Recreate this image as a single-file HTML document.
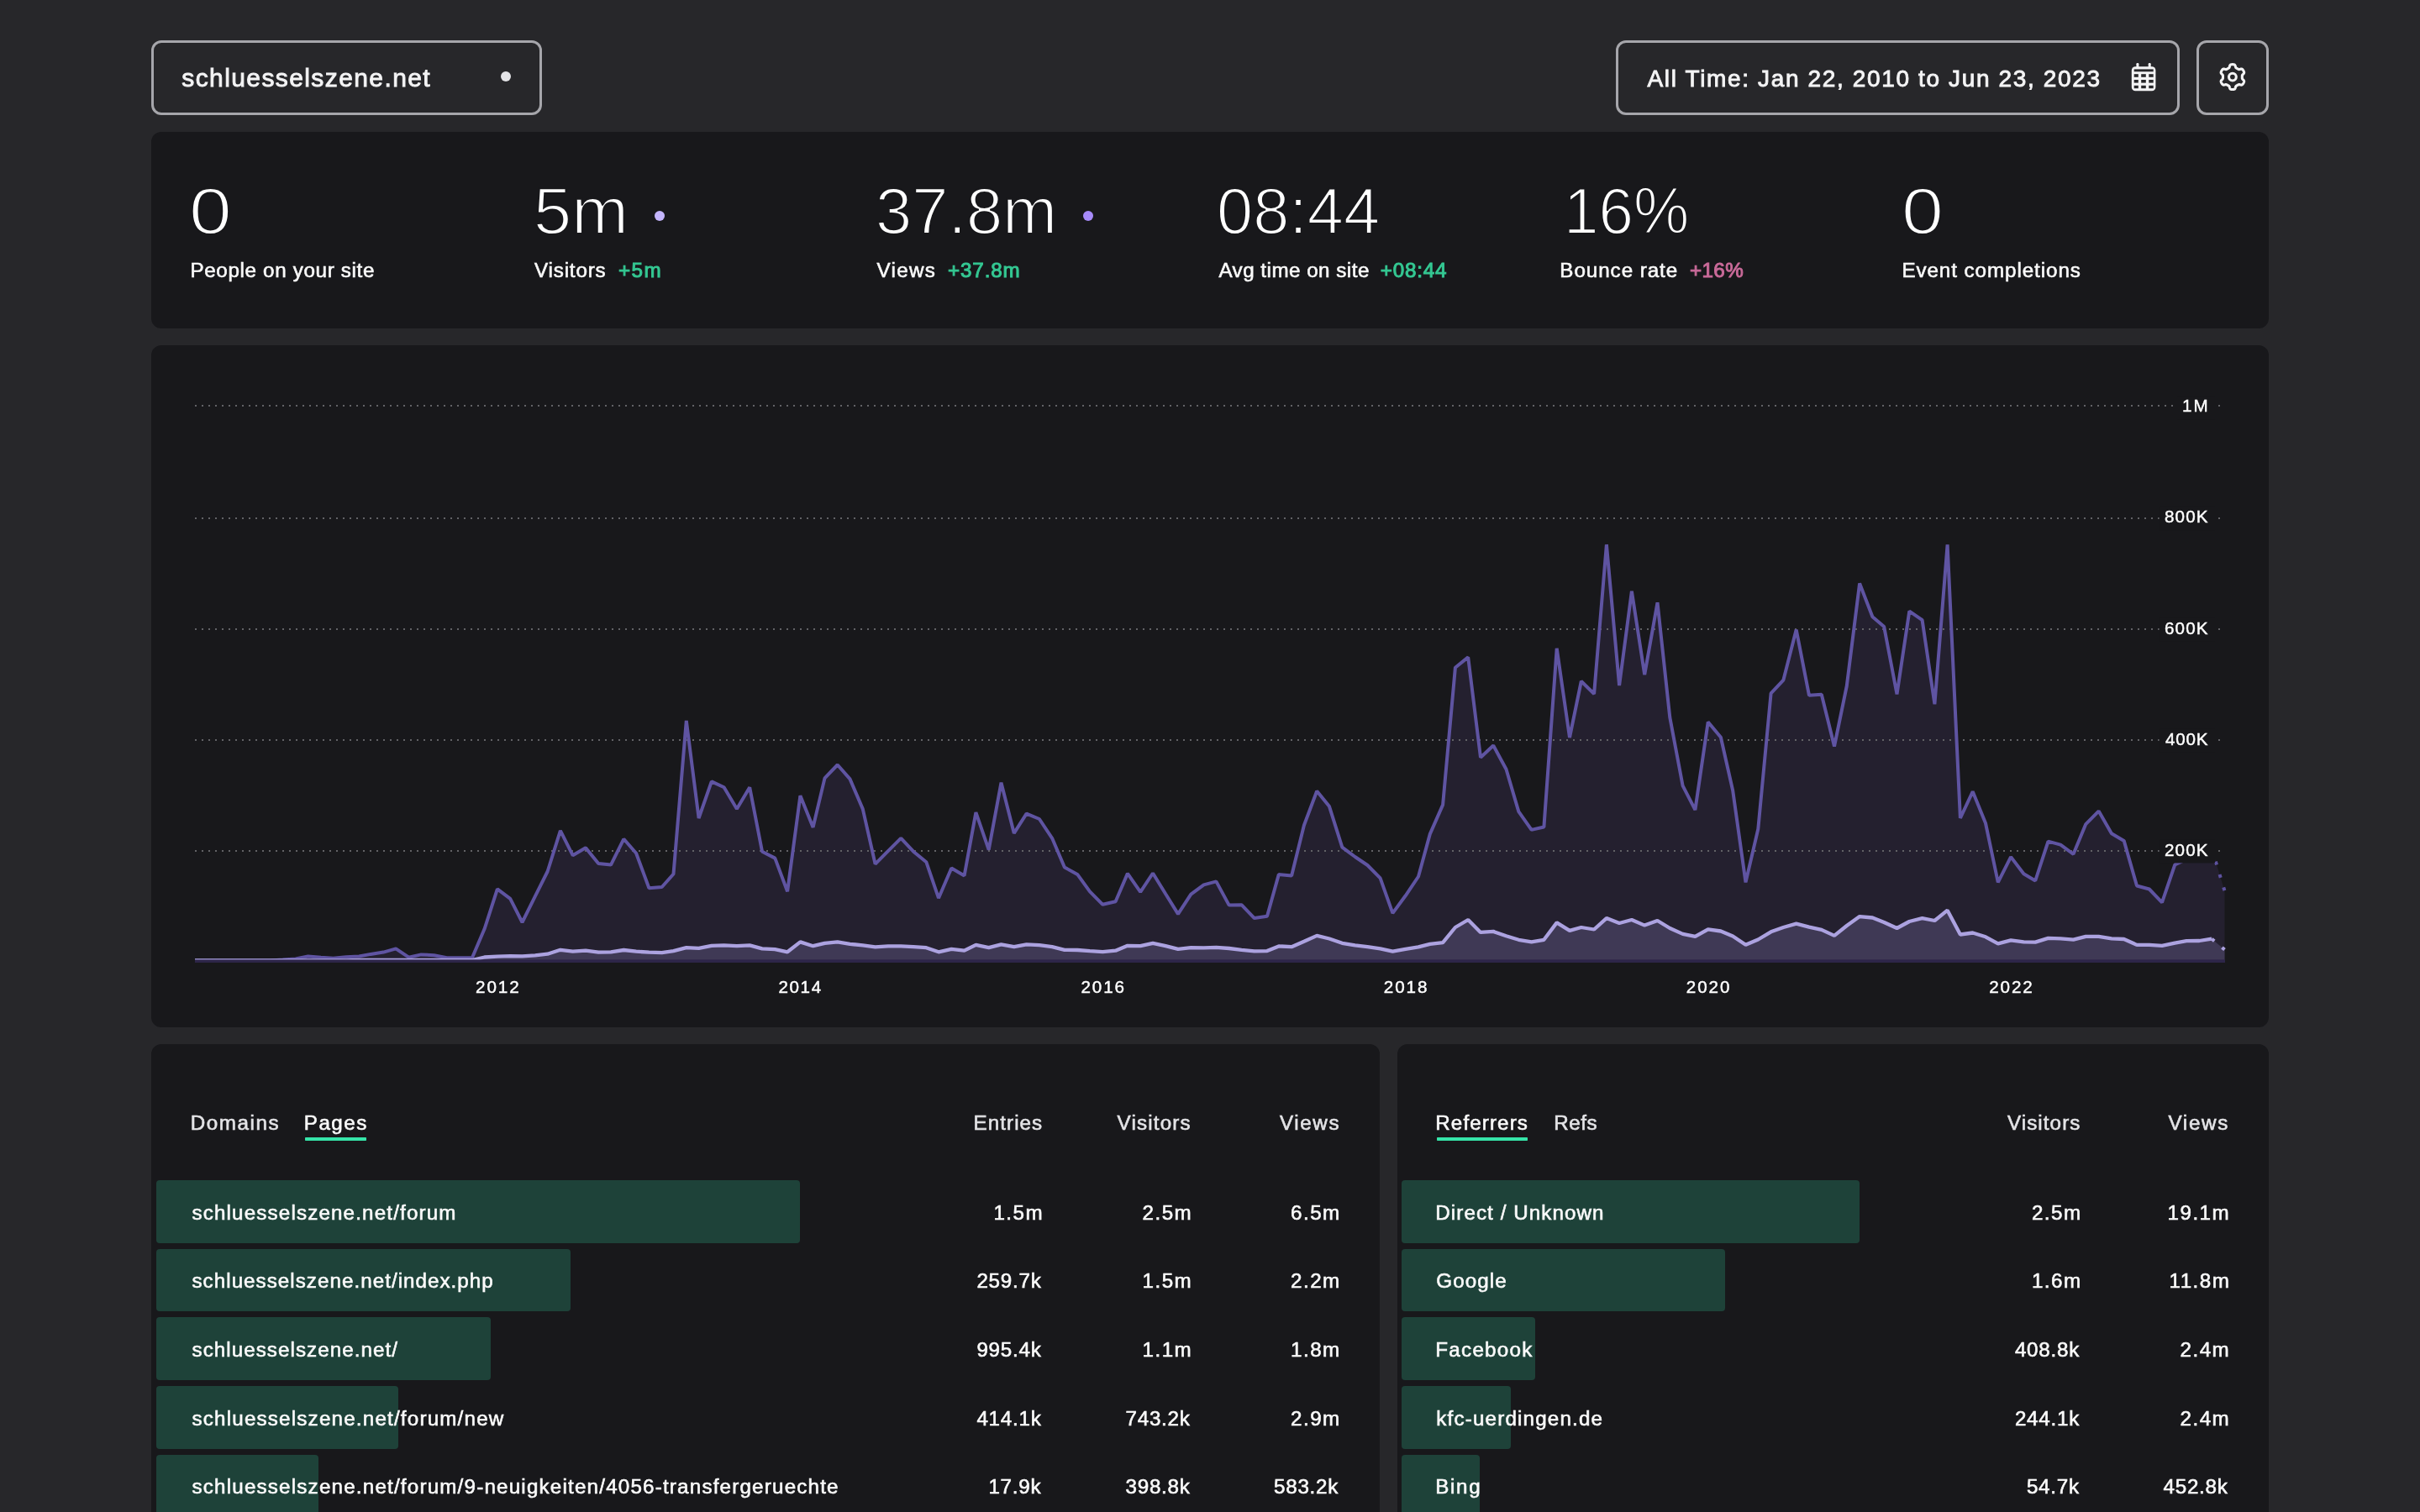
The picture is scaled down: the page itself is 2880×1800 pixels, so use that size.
<!DOCTYPE html>
<html lang="en"><head><meta charset="utf-8"><title>schluesselszene.net – Analytics</title>
<style>
html,body{margin:0;padding:0;background:#27272a;}
body{width:2880px;height:1800px;position:relative;overflow:hidden;font-family:"Liberation Sans",sans-serif;}
.t{position:absolute;white-space:pre;line-height:1;font-family:"Liberation Sans",sans-serif;}
.card{position:absolute;background:#18181b;border-radius:12px;}
.box{position:absolute;box-sizing:border-box;border:3px solid #a6a6ab;border-radius:12px;}
.bar{position:absolute;height:74.5px;background:#1e4239;border-radius:4px;}
.dot{position:absolute;border-radius:50%;}
.ul{position:absolute;height:4.4px;background:#36e5a9;border-radius:0.8px;}
.chart{position:absolute;left:0;top:0;}
.layer{position:absolute;left:0;top:0;width:2880px;height:1800px;will-change:transform;}
@media (max-width:1600px){html{zoom:0.5;}}
</style></head><body>
<div class="box" style="left:180px;top:48px;width:465px;height:89px"></div>
<div class="box" style="left:1923px;top:48px;width:671px;height:89px"></div>
<div class="box" style="left:2614px;top:48px;width:86px;height:89px"></div>
<div class="dot" style="left:595.8px;top:85.3px;width:12px;height:12px;background:#e4e4e7"></div>
<div class="card" style="left:180px;top:157px;width:2520px;height:233.5px"></div>
<div class="card" style="left:180px;top:411px;width:2520px;height:812px"></div>
<div class="card" style="left:180px;top:1242.6px;width:1461.8px;height:600px"></div>
<div class="card" style="left:1662.6px;top:1242.6px;width:1037.4px;height:600px"></div>
<div class="dot" style="left:778.5px;top:250.7px;width:12.6px;height:12.6px;background:#c4b5fd"></div>
<div class="dot" style="left:1288.7px;top:250.7px;width:12.6px;height:12.6px;background:#a78bfa"></div>
<div class="bar" style="left:186px;top:1405.0px;width:766.2px"></div><div class="bar" style="left:186px;top:1486.7px;width:493.0px"></div><div class="bar" style="left:186px;top:1568.3px;width:397.9px"></div><div class="bar" style="left:186px;top:1650.0px;width:288.2px"></div><div class="bar" style="left:186px;top:1731.6px;width:193.1px"></div><div class="bar" style="left:1668px;top:1405.0px;width:545.0px"></div><div class="bar" style="left:1668px;top:1486.7px;width:385.0px"></div><div class="bar" style="left:1668px;top:1568.3px;width:159.0px"></div><div class="bar" style="left:1668px;top:1650.0px;width:129.9px"></div><div class="bar" style="left:1668px;top:1731.6px;width:92.9px"></div>
<div class="ul" style="left:362.8px;top:1353.8px;width:73.2px"></div>
<div class="ul" style="left:1710.3px;top:1353.8px;width:107.8px"></div>
<svg class="chart" width="2880" height="1800" viewBox="0 0 2880 1800"><polygon points="232.0,1143.4 247.3,1143.4 261.1,1143.4 276.4,1143.4 291.2,1143.4 306.5,1143.4 321.2,1143.4 336.5,1142.5 351.8,1141.5 366.6,1138.5 381.9,1139.8 396.7,1140.8 412.0,1139.3 427.3,1138.5 441.1,1135.9 456.3,1133.6 471.1,1129.3 486.4,1139.7 501.2,1136.4 516.5,1137.2 531.8,1140.2 546.6,1140.2 561.9,1140.2 576.6,1105.8 591.9,1058.3 607.2,1069.8 621.5,1098.0 636.8,1067.1 651.6,1037.5 666.9,988.9 681.7,1018.3 697.0,1009.3 712.2,1028.0 727.0,1029.6 742.3,998.8 757.1,1015.7 772.4,1057.3 787.7,1056.0 801.5,1040.5 816.8,857.9 831.6,974.0 846.8,930.4 861.6,937.3 876.9,963.1 892.2,937.3 907.0,1013.7 922.3,1021.6 937.1,1061.3 952.4,947.2 967.6,984.9 981.5,926.4 996.7,910.5 1011.5,927.4 1026.8,963.1 1041.6,1028.6 1056.9,1013.1 1072.2,997.8 1087.0,1013.7 1102.3,1026.2 1117.0,1069.2 1132.3,1033.5 1147.6,1042.5 1161.4,967.1 1176.7,1011.7 1191.5,931.7 1206.8,991.9 1221.6,968.7 1236.9,975.0 1252.1,997.8 1266.9,1032.5 1282.2,1040.9 1297.0,1061.3 1312.3,1076.8 1327.6,1073.2 1341.9,1039.9 1357.2,1061.9 1372.0,1039.5 1387.2,1064.3 1402.0,1088.1 1417.3,1064.7 1432.6,1053.4 1447.4,1049.4 1462.7,1077.6 1477.5,1077.2 1492.8,1093.1 1508.0,1090.7 1521.8,1041.1 1537.1,1042.5 1551.9,982.5 1567.2,941.7 1582.0,960.1 1597.3,1008.7 1612.6,1020.0 1627.4,1030.0 1642.6,1045.4 1657.4,1087.1 1672.7,1066.3 1688.0,1043.5 1701.8,992.9 1717.1,958.1 1731.9,794.7 1747.2,782.4 1762.0,901.8 1777.2,887.5 1792.5,915.7 1807.3,966.1 1822.6,987.9 1837.4,984.5 1852.7,771.9 1868.0,878.0 1881.8,811.0 1897.1,826.0 1911.9,648.3 1927.1,816.1 1941.9,703.8 1957.2,803.2 1972.5,717.3 1987.3,854.2 2002.6,935.3 2017.4,964.1 2032.7,859.5 2047.9,877.8 2062.2,941.3 2077.5,1050.4 2092.3,986.9 2107.6,825.4 2122.4,809.6 2137.7,749.6 2153.0,827.8 2167.8,826.8 2183.0,888.5 2197.8,816.5 2213.1,694.5 2228.4,734.2 2242.2,746.1 2257.5,826.4 2272.3,727.6 2287.6,738.1 2302.4,838.3 2317.6,648.3 2332.9,974.0 2347.7,942.3 2363.0,980.0 2377.8,1050.4 2393.1,1020.1 2408.4,1040.3 2422.2,1048.5 2437.5,1001.6 2452.2,1005.6 2467.5,1016.8 2482.3,981.1 2497.6,965.6 2512.9,992.3 2527.7,1000.9 2543.0,1054.5 2557.8,1058.5 2573.0,1074.3 2588.3,1029.4 2602.1,1023.0 2617.4,1017.0 2632.2,1010.4 2647.5,1060.4 2647.5,1146 232.0,1146" fill="#24202f"/><polygon points="232.0,1143.4 247.3,1143.4 261.1,1143.4 276.4,1143.4 291.2,1143.4 306.5,1143.4 321.2,1143.4 336.5,1143.4 351.8,1143.4 366.6,1143.4 381.9,1143.4 396.7,1143.4 412.0,1143.4 427.3,1143.0 441.1,1143.0 456.3,1143.0 471.1,1143.0 486.4,1143.0 501.2,1143.0 516.5,1143.0 531.8,1143.0 546.6,1143.0 561.9,1143.0 576.6,1139.5 591.9,1138.7 607.2,1138.1 621.5,1138.3 636.8,1137.3 651.6,1135.7 666.9,1130.8 681.7,1132.7 697.0,1131.7 712.2,1133.7 727.0,1133.3 742.3,1131.0 757.1,1132.7 772.4,1133.7 787.7,1134.1 801.5,1132.1 816.8,1128.2 831.6,1128.8 846.8,1125.8 861.6,1125.4 876.9,1126.2 892.2,1125.4 907.0,1129.4 922.3,1130.2 937.1,1133.3 952.4,1121.4 967.6,1126.2 981.5,1122.8 996.7,1121.4 1011.5,1123.8 1026.8,1125.4 1041.6,1127.4 1056.9,1126.4 1072.2,1126.4 1087.0,1127.2 1102.3,1128.2 1117.0,1133.3 1132.3,1129.8 1147.6,1131.7 1161.4,1124.8 1176.7,1128.2 1191.5,1124.4 1206.8,1127.2 1221.6,1124.4 1236.9,1125.2 1252.1,1127.2 1266.9,1130.8 1282.2,1131.0 1297.0,1132.1 1312.3,1133.1 1327.6,1131.7 1341.9,1125.8 1357.2,1126.2 1372.0,1122.8 1387.2,1126.2 1402.0,1129.8 1417.3,1128.2 1432.6,1128.4 1447.4,1127.8 1462.7,1129.0 1477.5,1130.8 1492.8,1132.3 1508.0,1132.1 1521.8,1126.4 1537.1,1127.2 1551.9,1120.8 1567.2,1113.9 1582.0,1117.5 1597.3,1122.8 1612.6,1125.4 1627.4,1127.2 1642.6,1129.4 1657.4,1132.7 1672.7,1129.8 1688.0,1127.4 1701.8,1123.8 1717.1,1122.2 1731.9,1104.0 1747.2,1095.0 1762.0,1109.9 1777.2,1108.9 1792.5,1114.3 1807.3,1118.8 1822.6,1121.4 1837.4,1118.8 1852.7,1098.4 1868.0,1107.9 1881.8,1104.0 1897.1,1106.5 1911.9,1093.1 1927.1,1099.0 1941.9,1095.0 1957.2,1101.6 1972.5,1096.0 1987.3,1105.0 2002.6,1111.9 2017.4,1114.9 2032.7,1106.3 2047.9,1108.5 2062.2,1114.5 2077.5,1124.8 2092.3,1118.5 2107.6,1109.3 2122.4,1104.0 2137.7,1099.6 2153.0,1103.6 2167.8,1106.9 2183.0,1113.9 2197.8,1102.0 2213.1,1091.1 2228.4,1092.5 2242.2,1098.0 2257.5,1105.0 2272.3,1097.0 2287.6,1093.1 2302.4,1096.0 2317.6,1083.7 2332.9,1112.5 2347.7,1110.5 2363.0,1115.3 2377.8,1123.4 2393.1,1119.3 2408.4,1121.3 2422.2,1121.6 2437.5,1116.9 2452.2,1117.3 2467.5,1118.7 2482.3,1114.9 2497.6,1114.9 2512.9,1117.3 2527.7,1118.0 2543.0,1124.9 2557.8,1124.9 2573.0,1125.9 2588.3,1122.6 2602.1,1120.2 2617.4,1120.0 2632.2,1117.7 2647.5,1130.6 2647.5,1146 232.0,1146" fill="#3f3955"/><line x1="232" x2="2648" y1="483.00" y2="483.00" stroke="#626266" stroke-width="2" stroke-dasharray="2 6"/><line x1="232" x2="2648" y1="617.00" y2="617.00" stroke="#626266" stroke-width="2" stroke-dasharray="2 6"/><line x1="232" x2="2648" y1="749.00" y2="749.00" stroke="#626266" stroke-width="2" stroke-dasharray="2 6"/><line x1="232" x2="2648" y1="881.00" y2="881.00" stroke="#626266" stroke-width="2" stroke-dasharray="2 6"/><line x1="232" x2="2648" y1="1013.00" y2="1013.00" stroke="#626266" stroke-width="2" stroke-dasharray="2 6"/><polyline points="232.0,1143.4 247.3,1143.4 261.1,1143.4 276.4,1143.4 291.2,1143.4 306.5,1143.4 321.2,1143.4 336.5,1142.5 351.8,1141.5 366.6,1138.5 381.9,1139.8 396.7,1140.8 412.0,1139.3 427.3,1138.5 441.1,1135.9 456.3,1133.6 471.1,1129.3 486.4,1139.7 501.2,1136.4 516.5,1137.2 531.8,1140.2 546.6,1140.2 561.9,1140.2 576.6,1105.8 591.9,1058.3 607.2,1069.8 621.5,1098.0 636.8,1067.1 651.6,1037.5 666.9,988.9 681.7,1018.3 697.0,1009.3 712.2,1028.0 727.0,1029.6 742.3,998.8 757.1,1015.7 772.4,1057.3 787.7,1056.0 801.5,1040.5 816.8,857.9 831.6,974.0 846.8,930.4 861.6,937.3 876.9,963.1 892.2,937.3 907.0,1013.7 922.3,1021.6 937.1,1061.3 952.4,947.2 967.6,984.9 981.5,926.4 996.7,910.5 1011.5,927.4 1026.8,963.1 1041.6,1028.6 1056.9,1013.1 1072.2,997.8 1087.0,1013.7 1102.3,1026.2 1117.0,1069.2 1132.3,1033.5 1147.6,1042.5 1161.4,967.1 1176.7,1011.7 1191.5,931.7 1206.8,991.9 1221.6,968.7 1236.9,975.0 1252.1,997.8 1266.9,1032.5 1282.2,1040.9 1297.0,1061.3 1312.3,1076.8 1327.6,1073.2 1341.9,1039.9 1357.2,1061.9 1372.0,1039.5 1387.2,1064.3 1402.0,1088.1 1417.3,1064.7 1432.6,1053.4 1447.4,1049.4 1462.7,1077.6 1477.5,1077.2 1492.8,1093.1 1508.0,1090.7 1521.8,1041.1 1537.1,1042.5 1551.9,982.5 1567.2,941.7 1582.0,960.1 1597.3,1008.7 1612.6,1020.0 1627.4,1030.0 1642.6,1045.4 1657.4,1087.1 1672.7,1066.3 1688.0,1043.5 1701.8,992.9 1717.1,958.1 1731.9,794.7 1747.2,782.4 1762.0,901.8 1777.2,887.5 1792.5,915.7 1807.3,966.1 1822.6,987.9 1837.4,984.5 1852.7,771.9 1868.0,878.0 1881.8,811.0 1897.1,826.0 1911.9,648.3 1927.1,816.1 1941.9,703.8 1957.2,803.2 1972.5,717.3 1987.3,854.2 2002.6,935.3 2017.4,964.1 2032.7,859.5 2047.9,877.8 2062.2,941.3 2077.5,1050.4 2092.3,986.9 2107.6,825.4 2122.4,809.6 2137.7,749.6 2153.0,827.8 2167.8,826.8 2183.0,888.5 2197.8,816.5 2213.1,694.5 2228.4,734.2 2242.2,746.1 2257.5,826.4 2272.3,727.6 2287.6,738.1 2302.4,838.3 2317.6,648.3 2332.9,974.0 2347.7,942.3 2363.0,980.0 2377.8,1050.4 2393.1,1020.1 2408.4,1040.3 2422.2,1048.5 2437.5,1001.6 2452.2,1005.6 2467.5,1016.8 2482.3,981.1 2497.6,965.6 2512.9,992.3 2527.7,1000.9 2543.0,1054.5 2557.8,1058.5 2573.0,1074.3 2588.3,1029.4 2602.1,1023.0 2617.4,1017.0 2632.2,1010.4" fill="none" stroke="#5f54a2" stroke-width="4" stroke-linejoin="bevel"/><polyline points="2632.2,1010.4 2647.5,1060.4" fill="none" stroke="#5d52a0" stroke-width="4" stroke-dasharray="4 12"/><polyline points="232.0,1143.4 247.3,1143.4 261.1,1143.4 276.4,1143.4 291.2,1143.4 306.5,1143.4 321.2,1143.4 336.5,1143.4 351.8,1143.4 366.6,1143.4 381.9,1143.4 396.7,1143.4 412.0,1143.4 427.3,1143.0 441.1,1143.0 456.3,1143.0 471.1,1143.0 486.4,1143.0 501.2,1143.0 516.5,1143.0 531.8,1143.0 546.6,1143.0 561.9,1143.0 576.6,1139.5 591.9,1138.7 607.2,1138.1 621.5,1138.3 636.8,1137.3 651.6,1135.7 666.9,1130.8 681.7,1132.7 697.0,1131.7 712.2,1133.7 727.0,1133.3 742.3,1131.0 757.1,1132.7 772.4,1133.7 787.7,1134.1 801.5,1132.1 816.8,1128.2 831.6,1128.8 846.8,1125.8 861.6,1125.4 876.9,1126.2 892.2,1125.4 907.0,1129.4 922.3,1130.2 937.1,1133.3 952.4,1121.4 967.6,1126.2 981.5,1122.8 996.7,1121.4 1011.5,1123.8 1026.8,1125.4 1041.6,1127.4 1056.9,1126.4 1072.2,1126.4 1087.0,1127.2 1102.3,1128.2 1117.0,1133.3 1132.3,1129.8 1147.6,1131.7 1161.4,1124.8 1176.7,1128.2 1191.5,1124.4 1206.8,1127.2 1221.6,1124.4 1236.9,1125.2 1252.1,1127.2 1266.9,1130.8 1282.2,1131.0 1297.0,1132.1 1312.3,1133.1 1327.6,1131.7 1341.9,1125.8 1357.2,1126.2 1372.0,1122.8 1387.2,1126.2 1402.0,1129.8 1417.3,1128.2 1432.6,1128.4 1447.4,1127.8 1462.7,1129.0 1477.5,1130.8 1492.8,1132.3 1508.0,1132.1 1521.8,1126.4 1537.1,1127.2 1551.9,1120.8 1567.2,1113.9 1582.0,1117.5 1597.3,1122.8 1612.6,1125.4 1627.4,1127.2 1642.6,1129.4 1657.4,1132.7 1672.7,1129.8 1688.0,1127.4 1701.8,1123.8 1717.1,1122.2 1731.9,1104.0 1747.2,1095.0 1762.0,1109.9 1777.2,1108.9 1792.5,1114.3 1807.3,1118.8 1822.6,1121.4 1837.4,1118.8 1852.7,1098.4 1868.0,1107.9 1881.8,1104.0 1897.1,1106.5 1911.9,1093.1 1927.1,1099.0 1941.9,1095.0 1957.2,1101.6 1972.5,1096.0 1987.3,1105.0 2002.6,1111.9 2017.4,1114.9 2032.7,1106.3 2047.9,1108.5 2062.2,1114.5 2077.5,1124.8 2092.3,1118.5 2107.6,1109.3 2122.4,1104.0 2137.7,1099.6 2153.0,1103.6 2167.8,1106.9 2183.0,1113.9 2197.8,1102.0 2213.1,1091.1 2228.4,1092.5 2242.2,1098.0 2257.5,1105.0 2272.3,1097.0 2287.6,1093.1 2302.4,1096.0 2317.6,1083.7 2332.9,1112.5 2347.7,1110.5 2363.0,1115.3 2377.8,1123.4 2393.1,1119.3 2408.4,1121.3 2422.2,1121.6 2437.5,1116.9 2452.2,1117.3 2467.5,1118.7 2482.3,1114.9 2497.6,1114.9 2512.9,1117.3 2527.7,1118.0 2543.0,1124.9 2557.8,1124.9 2573.0,1125.9 2588.3,1122.6 2602.1,1120.2 2617.4,1120.0 2632.2,1117.7" fill="none" stroke="#aca2e0" stroke-width="4.3" stroke-linejoin="bevel"/><polyline points="2632.2,1117.7 2647.5,1130.6" fill="none" stroke="#aca2e0" stroke-width="4" stroke-dasharray="4 12"/><rect x="232" y="1142.4" width="2416" height="3.6" fill="#2d2549"/><rect x="2591.0" y="471.7" width="45.0" height="27.5" fill="#18181b"/><rect x="2569.6" y="603.8" width="66.4" height="27.5" fill="#18181b"/><rect x="2569.6" y="735.8" width="66.4" height="27.5" fill="#18181b"/><rect x="2569.6" y="867.9" width="66.4" height="27.5" fill="#18181b"/><rect x="2569.6" y="999.9" width="66.4" height="27.5" fill="#18181b"/></svg>
<svg class="chart" width="2880" height="1800" viewBox="0 0 2880 1800"><rect x="2536.8" y="79.2" width="28.6" height="29" rx="4.5" fill="#f4f4f5"/><rect x="2542.4" y="75" width="3" height="7" rx="1.2" fill="#f4f4f5"/><rect x="2556.7" y="75" width="3" height="7" rx="1.2" fill="#f4f4f5"/><rect x="2539.7" y="82.4" width="23" height="2.9" fill="#27272a"/><rect x="2539.7" y="88.2" width="5.1" height="3.6" fill="#27272a"/><rect x="2539.7" y="95" width="5.1" height="3.6" fill="#27272a"/><rect x="2539.7" y="101.8" width="5.1" height="3.4" fill="#27272a"/><rect x="2548.2" y="88.2" width="5.6" height="3.6" fill="#27272a"/><rect x="2548.2" y="95" width="5.6" height="3.6" fill="#27272a"/><rect x="2548.2" y="101.8" width="5.6" height="3.4" fill="#27272a"/><rect x="2557.3" y="88.2" width="5.4" height="3.6" fill="#27272a"/><rect x="2557.3" y="95" width="5.4" height="3.6" fill="#27272a"/><rect x="2557.3" y="101.8" width="5.4" height="3.4" fill="#27272a"/><path d="M2668.35,91.60 L2668.35,91.30 L2668.34,91.00 L2668.34,90.70 L2668.34,90.40 L2668.36,90.09 L2668.41,89.78 L2668.54,89.44 L2668.77,89.08 L2669.16,88.66 L2669.65,88.18 L2670.13,87.68 L2670.46,87.19 L2670.63,86.74 L2670.66,86.32 L2670.61,85.92 L2670.51,85.54 L2670.37,85.18 L2670.21,84.82 L2670.04,84.47 L2669.85,84.12 L2669.64,83.79 L2669.43,83.46 L2669.20,83.15 L2668.95,82.85 L2668.67,82.57 L2668.36,82.32 L2667.98,82.14 L2667.50,82.06 L2666.91,82.10 L2666.23,82.27 L2665.58,82.46 L2665.02,82.58 L2664.59,82.60 L2664.24,82.54 L2663.94,82.43 L2663.66,82.29 L2663.40,82.14 L2663.14,81.99 L2662.88,81.84 L2662.62,81.68 L2662.36,81.54 L2662.10,81.39 L2661.84,81.24 L2661.58,81.09 L2661.32,80.92 L2661.08,80.72 L2660.85,80.44 L2660.65,80.05 L2660.48,79.51 L2660.32,78.85 L2660.12,78.19 L2659.86,77.65 L2659.55,77.28 L2659.21,77.04 L2658.84,76.89 L2658.46,76.79 L2658.07,76.72 L2657.68,76.68 L2657.29,76.66 L2656.90,76.65 L2656.51,76.66 L2656.12,76.68 L2655.73,76.72 L2655.34,76.79 L2654.96,76.89 L2654.59,77.04 L2654.25,77.28 L2653.94,77.65 L2653.68,78.19 L2653.48,78.85 L2653.32,79.51 L2653.15,80.05 L2652.95,80.44 L2652.72,80.72 L2652.48,80.92 L2652.22,81.09 L2651.96,81.24 L2651.70,81.39 L2651.44,81.54 L2651.18,81.68 L2650.92,81.84 L2650.66,81.99 L2650.40,82.14 L2650.14,82.29 L2649.86,82.43 L2649.56,82.54 L2649.21,82.60 L2648.78,82.58 L2648.22,82.46 L2647.57,82.27 L2646.89,82.10 L2646.30,82.06 L2645.82,82.14 L2645.44,82.32 L2645.13,82.57 L2644.85,82.85 L2644.60,83.15 L2644.37,83.46 L2644.16,83.79 L2643.95,84.12 L2643.76,84.47 L2643.59,84.82 L2643.43,85.18 L2643.29,85.54 L2643.19,85.92 L2643.14,86.32 L2643.17,86.74 L2643.34,87.19 L2643.67,87.68 L2644.15,88.18 L2644.64,88.66 L2645.03,89.08 L2645.26,89.44 L2645.39,89.78 L2645.44,90.09 L2645.46,90.40 L2645.46,90.70 L2645.46,91.00 L2645.45,91.30 L2645.45,91.60 L2645.45,91.90 L2645.46,92.20 L2645.46,92.50 L2645.46,92.80 L2645.44,93.11 L2645.39,93.42 L2645.26,93.76 L2645.03,94.12 L2644.64,94.54 L2644.15,95.02 L2643.67,95.52 L2643.34,96.01 L2643.17,96.46 L2643.14,96.88 L2643.19,97.28 L2643.29,97.66 L2643.43,98.02 L2643.59,98.38 L2643.76,98.73 L2643.95,99.07 L2644.16,99.41 L2644.37,99.74 L2644.60,100.05 L2644.85,100.35 L2645.13,100.63 L2645.44,100.88 L2645.82,101.06 L2646.30,101.14 L2646.89,101.10 L2647.57,100.93 L2648.22,100.74 L2648.78,100.62 L2649.21,100.60 L2649.56,100.66 L2649.86,100.77 L2650.14,100.91 L2650.40,101.06 L2650.66,101.21 L2650.92,101.36 L2651.18,101.52 L2651.44,101.66 L2651.70,101.81 L2651.96,101.96 L2652.22,102.11 L2652.48,102.28 L2652.72,102.48 L2652.95,102.76 L2653.15,103.15 L2653.32,103.69 L2653.48,104.35 L2653.68,105.01 L2653.94,105.55 L2654.25,105.92 L2654.59,106.16 L2654.96,106.31 L2655.34,106.41 L2655.73,106.48 L2656.12,106.52 L2656.51,106.54 L2656.90,106.55 L2657.29,106.54 L2657.68,106.52 L2658.07,106.48 L2658.46,106.41 L2658.84,106.31 L2659.21,106.16 L2659.55,105.92 L2659.86,105.55 L2660.12,105.01 L2660.32,104.35 L2660.48,103.69 L2660.65,103.15 L2660.85,102.76 L2661.08,102.48 L2661.32,102.28 L2661.58,102.11 L2661.84,101.96 L2662.10,101.81 L2662.36,101.66 L2662.62,101.52 L2662.88,101.36 L2663.14,101.21 L2663.40,101.06 L2663.66,100.91 L2663.94,100.77 L2664.24,100.66 L2664.59,100.60 L2665.02,100.62 L2665.58,100.74 L2666.23,100.93 L2666.91,101.10 L2667.50,101.14 L2667.98,101.06 L2668.36,100.88 L2668.67,100.63 L2668.95,100.35 L2669.20,100.05 L2669.43,99.74 L2669.64,99.41 L2669.85,99.07 L2670.04,98.73 L2670.21,98.38 L2670.37,98.02 L2670.51,97.66 L2670.61,97.28 L2670.66,96.88 L2670.63,96.46 L2670.46,96.01 L2670.13,95.52 L2669.65,95.02 L2669.16,94.54 L2668.77,94.12 L2668.54,93.76 L2668.41,93.42 L2668.36,93.11 L2668.34,92.80 L2668.34,92.50 L2668.34,92.20 L2668.35,91.90Z" fill="none" stroke="#f4f4f5" stroke-width="3.1" stroke-linejoin="round"/><circle cx="2656.9" cy="91.6" r="4.4" fill="none" stroke="#f4f4f5" stroke-width="3.1"/></svg>
<div class="layer">
<div class="t" style="left:216.3px;top:78.4px;font-size:30px;color:#f4f4f5;letter-spacing:1.4px;-webkit-text-stroke:0.9px #f4f4f5;">schluesselszene.net</div>
<div class="t" style="left:1960.5px;top:80.2px;font-size:28px;color:#f4f4f5;letter-spacing:1.64px;-webkit-text-stroke:0.9px #f4f4f5;">All Time: Jan 22, 2010 to Jun 23, 2023</div>
<div class="t" style="left:225.2px;top:212.4px;font-size:78.5px;color:#ffffff;transform:scaleX(1.1639);transform-origin:0 0;-webkit-text-stroke:2.0px #18181b;">0</div>
<div class="t" style="left:635.2px;top:212.4px;font-size:78.5px;color:#ffffff;transform:scaleX(1.0354);transform-origin:0 0;-webkit-text-stroke:2.0px #18181b;">5m</div>
<div class="t" style="left:1041.8px;top:212.4px;font-size:78.5px;color:#ffffff;transform:scaleX(0.9894);transform-origin:0 0;-webkit-text-stroke:2.0px #18181b;">37.8m</div>
<div class="t" style="left:1448.1px;top:212.4px;font-size:78.5px;color:#ffffff;transform:scaleX(0.9884);transform-origin:0 0;-webkit-text-stroke:2.0px #18181b;">08:44</div>
<div class="t" style="left:1861.3px;top:212.4px;font-size:78.5px;color:#ffffff;transform:scaleX(0.9493);transform-origin:0 0;-webkit-text-stroke:2.0px #18181b;">16%</div>
<div class="t" style="left:2262.6px;top:212.4px;font-size:78.5px;color:#ffffff;transform:scaleX(1.1444);transform-origin:0 0;-webkit-text-stroke:2.0px #18181b;">0</div>
<div class="t" style="left:226.4px;top:309.5px;font-size:24.2px;color:#fafafa;letter-spacing:0.66px;-webkit-text-stroke:0.6px #fafafa;">People on your site</div>
<div class="t" style="left:636.0px;top:309.5px;font-size:24.2px;color:#fafafa;letter-spacing:0.83px;-webkit-text-stroke:0.6px #fafafa;">Visitors</div>
<div class="t" style="left:736.0px;top:309.5px;font-size:24.2px;color:#34c893;letter-spacing:1.45px;-webkit-text-stroke:1.0px #34c893;">+5m</div>
<div class="t" style="left:1043.6px;top:309.5px;font-size:24.2px;color:#fafafa;letter-spacing:1.3px;-webkit-text-stroke:0.6px #fafafa;">Views</div>
<div class="t" style="left:1128.0px;top:309.5px;font-size:24.2px;color:#34c893;letter-spacing:0.88px;-webkit-text-stroke:1.0px #34c893;">+37.8m</div>
<div class="t" style="left:1450.4px;top:309.5px;font-size:24.2px;color:#fafafa;letter-spacing:0.49px;-webkit-text-stroke:0.6px #fafafa;">Avg time on site</div>
<div class="t" style="left:1642.8px;top:309.5px;font-size:24.2px;color:#34c893;letter-spacing:0.8px;-webkit-text-stroke:1.0px #34c893;">+08:44</div>
<div class="t" style="left:1856.3px;top:309.5px;font-size:24.2px;color:#fafafa;letter-spacing:0.95px;-webkit-text-stroke:0.6px #fafafa;">Bounce rate</div>
<div class="t" style="left:2010.9px;top:309.5px;font-size:24.2px;color:#c96a99;letter-spacing:0.43px;-webkit-text-stroke:1.0px #c96a99;">+16%</div>
<div class="t" style="left:2263.4px;top:309.5px;font-size:24.2px;color:#fafafa;letter-spacing:0.93px;-webkit-text-stroke:0.6px #fafafa;">Event completions</div>
<div class="t" style="left:226.7px;top:1325.4px;font-size:24.2px;color:#e4e4e7;letter-spacing:1.57px;-webkit-text-stroke:0.6px #e4e4e7;">Domains</div>
<div class="t" style="left:361.8px;top:1325.4px;font-size:24.2px;color:#fafafa;letter-spacing:1.47px;-webkit-text-stroke:0.6px #fafafa;">Pages</div>
<div class="t" style="left:1158.6px;top:1325.4px;font-size:24.2px;color:#e4e4e7;letter-spacing:1.05px;-webkit-text-stroke:0.6px #e4e4e7;">Entries</div>
<div class="t" style="left:1329.6px;top:1325.4px;font-size:24.2px;color:#e4e4e7;letter-spacing:1.17px;-webkit-text-stroke:0.6px #e4e4e7;">Visitors</div>
<div class="t" style="left:1522.9px;top:1325.4px;font-size:24.2px;color:#e4e4e7;letter-spacing:1.65px;-webkit-text-stroke:0.6px #e4e4e7;">Views</div>
<div class="t" style="left:1708.3px;top:1325.4px;font-size:24.2px;color:#fafafa;letter-spacing:1.1px;-webkit-text-stroke:0.6px #fafafa;">Referrers</div>
<div class="t" style="left:1849.2px;top:1325.4px;font-size:24.2px;color:#e4e4e7;letter-spacing:0.53px;-webkit-text-stroke:0.6px #e4e4e7;">Refs</div>
<div class="t" style="left:2388.9px;top:1325.4px;font-size:24.2px;color:#e4e4e7;letter-spacing:1.09px;-webkit-text-stroke:0.6px #e4e4e7;">Visitors</div>
<div class="t" style="left:2580.5px;top:1325.4px;font-size:24.2px;color:#e4e4e7;letter-spacing:1.67px;-webkit-text-stroke:0.6px #e4e4e7;">Views</div>
<div class="t" style="left:228.5px;top:1431.7px;font-size:24.2px;color:#fafafa;letter-spacing:1.15px;-webkit-text-stroke:0.6px #fafafa;">schluesselszene.net/forum</div>
<div class="t" style="left:1182.4px;top:1431.7px;font-size:24.2px;color:#fafafa;letter-spacing:1.5px;-webkit-text-stroke:0.6px #fafafa;">1.5m</div>
<div class="t" style="left:1359.5px;top:1431.7px;font-size:24.2px;color:#fafafa;letter-spacing:1.5px;-webkit-text-stroke:0.6px #fafafa;">2.5m</div>
<div class="t" style="left:1536.0px;top:1431.7px;font-size:24.2px;color:#fafafa;letter-spacing:1.5px;-webkit-text-stroke:0.6px #fafafa;">6.5m</div>
<div class="t" style="left:228.5px;top:1513.4px;font-size:24.2px;color:#fafafa;letter-spacing:1.03px;-webkit-text-stroke:0.6px #fafafa;">schluesselszene.net/index.php</div>
<div class="t" style="left:1162.4px;top:1513.4px;font-size:24.2px;color:#fafafa;letter-spacing:0.75px;-webkit-text-stroke:0.6px #fafafa;">259.7k</div>
<div class="t" style="left:1359.5px;top:1513.4px;font-size:24.2px;color:#fafafa;letter-spacing:1.5px;-webkit-text-stroke:0.6px #fafafa;">1.5m</div>
<div class="t" style="left:1536.0px;top:1513.4px;font-size:24.2px;color:#fafafa;letter-spacing:1.5px;-webkit-text-stroke:0.6px #fafafa;">2.2m</div>
<div class="t" style="left:228.5px;top:1595.0px;font-size:24.2px;color:#fafafa;letter-spacing:1.05px;-webkit-text-stroke:0.6px #fafafa;">schluesselszene.net/</div>
<div class="t" style="left:1162.4px;top:1595.0px;font-size:24.2px;color:#fafafa;letter-spacing:0.75px;-webkit-text-stroke:0.6px #fafafa;">995.4k</div>
<div class="t" style="left:1359.5px;top:1595.0px;font-size:24.2px;color:#fafafa;letter-spacing:1.5px;-webkit-text-stroke:0.6px #fafafa;">1.1m</div>
<div class="t" style="left:1536.0px;top:1595.0px;font-size:24.2px;color:#fafafa;letter-spacing:1.5px;-webkit-text-stroke:0.6px #fafafa;">1.8m</div>
<div class="t" style="left:228.5px;top:1676.7px;font-size:24.2px;color:#fafafa;letter-spacing:1.19px;-webkit-text-stroke:0.6px #fafafa;">schluesselszene.net/forum/new</div>
<div class="t" style="left:1162.4px;top:1676.7px;font-size:24.2px;color:#fafafa;letter-spacing:0.75px;-webkit-text-stroke:0.6px #fafafa;">414.1k</div>
<div class="t" style="left:1339.5px;top:1676.7px;font-size:24.2px;color:#fafafa;letter-spacing:0.75px;-webkit-text-stroke:0.6px #fafafa;">743.2k</div>
<div class="t" style="left:1536.0px;top:1676.7px;font-size:24.2px;color:#fafafa;letter-spacing:1.5px;-webkit-text-stroke:0.6px #fafafa;">2.9m</div>
<div class="t" style="left:228.5px;top:1758.3px;font-size:24.2px;color:#fafafa;letter-spacing:1.19px;-webkit-text-stroke:0.6px #fafafa;">schluesselszene.net/forum/9-neuigkeiten/4056-transfergeruechte</div>
<div class="t" style="left:1176.4px;top:1758.3px;font-size:24.2px;color:#fafafa;letter-spacing:0.75px;-webkit-text-stroke:0.6px #fafafa;">17.9k</div>
<div class="t" style="left:1339.5px;top:1758.3px;font-size:24.2px;color:#fafafa;letter-spacing:0.75px;-webkit-text-stroke:0.6px #fafafa;">398.8k</div>
<div class="t" style="left:1516.0px;top:1758.3px;font-size:24.2px;color:#fafafa;letter-spacing:0.75px;-webkit-text-stroke:0.6px #fafafa;">583.2k</div>
<div class="t" style="left:1708.3px;top:1431.7px;font-size:24.2px;color:#fafafa;letter-spacing:1.07px;-webkit-text-stroke:0.6px #fafafa;">Direct / Unknown</div>
<div class="t" style="left:2417.9px;top:1431.7px;font-size:24.2px;color:#fafafa;letter-spacing:1.5px;-webkit-text-stroke:0.6px #fafafa;">2.5m</div>
<div class="t" style="left:2579.5px;top:1431.7px;font-size:24.2px;color:#fafafa;letter-spacing:1.5px;-webkit-text-stroke:0.6px #fafafa;">19.1m</div>
<div class="t" style="left:1709.3px;top:1513.4px;font-size:24.2px;color:#fafafa;letter-spacing:1.06px;-webkit-text-stroke:0.6px #fafafa;">Google</div>
<div class="t" style="left:2417.9px;top:1513.4px;font-size:24.2px;color:#fafafa;letter-spacing:1.5px;-webkit-text-stroke:0.6px #fafafa;">1.6m</div>
<div class="t" style="left:2581.5px;top:1513.4px;font-size:24.2px;color:#fafafa;letter-spacing:1.5px;-webkit-text-stroke:0.6px #fafafa;">11.8m</div>
<div class="t" style="left:1708.3px;top:1595.0px;font-size:24.2px;color:#fafafa;letter-spacing:1.26px;-webkit-text-stroke:0.6px #fafafa;">Facebook</div>
<div class="t" style="left:2397.9px;top:1595.0px;font-size:24.2px;color:#fafafa;letter-spacing:0.75px;-webkit-text-stroke:0.6px #fafafa;">408.8k</div>
<div class="t" style="left:2594.5px;top:1595.0px;font-size:24.2px;color:#fafafa;letter-spacing:1.5px;-webkit-text-stroke:0.6px #fafafa;">2.4m</div>
<div class="t" style="left:1709.3px;top:1676.7px;font-size:24.2px;color:#fafafa;letter-spacing:1.17px;-webkit-text-stroke:0.6px #fafafa;">kfc-uerdingen.de</div>
<div class="t" style="left:2397.9px;top:1676.7px;font-size:24.2px;color:#fafafa;letter-spacing:0.75px;-webkit-text-stroke:0.6px #fafafa;">244.1k</div>
<div class="t" style="left:2594.5px;top:1676.7px;font-size:24.2px;color:#fafafa;letter-spacing:1.5px;-webkit-text-stroke:0.6px #fafafa;">2.4m</div>
<div class="t" style="left:1708.3px;top:1758.3px;font-size:24.2px;color:#fafafa;letter-spacing:1.63px;-webkit-text-stroke:0.6px #fafafa;">Bing</div>
<div class="t" style="left:2411.9px;top:1758.3px;font-size:24.2px;color:#fafafa;letter-spacing:0.75px;-webkit-text-stroke:0.6px #fafafa;">54.7k</div>
<div class="t" style="left:2574.5px;top:1758.3px;font-size:24.2px;color:#fafafa;letter-spacing:0.75px;-webkit-text-stroke:0.6px #fafafa;">452.8k</div>
<div class="t" style="left:2597.0px;top:473.4px;font-size:20.6px;color:#ffffff;letter-spacing:2.0px;-webkit-text-stroke:0.45px #ffffff;">1M</div>
<div class="t" style="left:2576.0px;top:605.4px;font-size:20.6px;color:#ffffff;letter-spacing:1.13px;-webkit-text-stroke:0.45px #ffffff;">800K</div>
<div class="t" style="left:2576.0px;top:737.5px;font-size:20.6px;color:#ffffff;letter-spacing:1.13px;-webkit-text-stroke:0.45px #ffffff;">600K</div>
<div class="t" style="left:2577.0px;top:869.5px;font-size:20.6px;color:#ffffff;letter-spacing:0.8px;-webkit-text-stroke:0.45px #ffffff;">400K</div>
<div class="t" style="left:2576.0px;top:1001.6px;font-size:20.6px;color:#ffffff;letter-spacing:1.13px;-webkit-text-stroke:0.45px #ffffff;">200K</div>
<div class="t" style="left:566.0px;top:1164.7px;font-size:20.6px;color:#ffffff;letter-spacing:1.93px;-webkit-text-stroke:0.45px #ffffff;">2012</div>
<div class="t" style="left:926.5px;top:1164.7px;font-size:20.6px;color:#ffffff;letter-spacing:1.6px;-webkit-text-stroke:0.45px #ffffff;">2014</div>
<div class="t" style="left:1286.4px;top:1164.7px;font-size:20.6px;color:#ffffff;letter-spacing:1.93px;-webkit-text-stroke:0.45px #ffffff;">2016</div>
<div class="t" style="left:1646.8px;top:1164.7px;font-size:20.6px;color:#ffffff;letter-spacing:1.93px;-webkit-text-stroke:0.45px #ffffff;">2018</div>
<div class="t" style="left:2006.8px;top:1164.7px;font-size:20.6px;color:#ffffff;letter-spacing:1.93px;-webkit-text-stroke:0.45px #ffffff;">2020</div>
<div class="t" style="left:2367.2px;top:1164.7px;font-size:20.6px;color:#ffffff;letter-spacing:1.93px;-webkit-text-stroke:0.45px #ffffff;">2022</div>
</div>
</body></html>
